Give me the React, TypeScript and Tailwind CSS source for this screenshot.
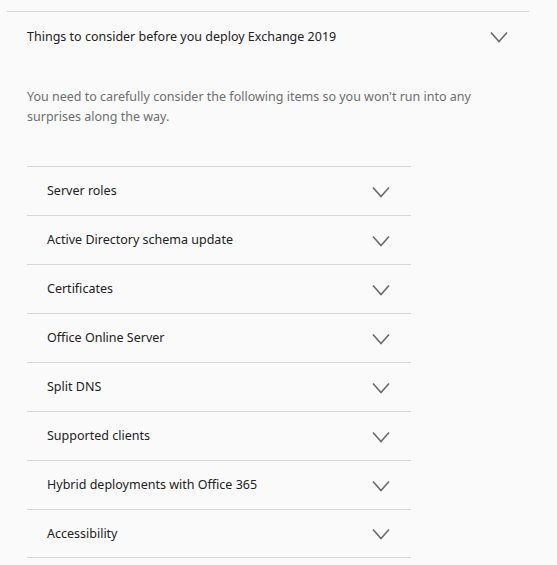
const items = [
	'Server roles',
	'Active Directory schema update',
	'Certificates',
	'Office Online Server',
	'Split DNS',
	'Supported clients',
	'Hybrid deployments with Office 365',
	'Accessibility',
];

const Chevron = () => (
	<svg width="18" height="12" viewBox="0 0 18 12" fill="none" className="shrink-0">
		<path d="M1 1.5L9 10.5L17 1.5" stroke="#6b6b6b" strokeWidth="1.6" />
	</svg>
);

export default function App() {
	return (
		<div className="min-h-[565px] w-[557px] bg-[#fafafa] pt-[11px] font-['Noto_Sans',sans-serif]">
			<div className="ml-[7px] w-[522px] border-t border-[#d6d6d6]">
				<div className="flex h-[50px] items-center justify-between pl-[20px] pr-[21px]">
					<span className="text-[12.5px] text-[#222]">Things to consider before you deploy Exchange 2019</span>
					<Chevron />
				</div>
			</div>
			<p className="mt-[25px] w-[500px] pl-[27px] text-[12.5px] leading-[20px] text-[#6e6e6e]">
				You need to carefully consider the following items so you won't run into any
				<br />
				surprises along the way.
			</p>
			<div className="ml-[27px] mt-[39px] w-[384px]">
				{items.map((item) => (
					<div
						key={item}
						className="flex h-[49px] items-center justify-between border-t border-[#d6d6d6] pl-[20px] pr-[21px] pt-[1px] last:border-b"
					>
						<span className="text-[12.5px] text-[#222]">{item}</span>
						<Chevron />
					</div>
				))}
			</div>
		</div>
	);
}
